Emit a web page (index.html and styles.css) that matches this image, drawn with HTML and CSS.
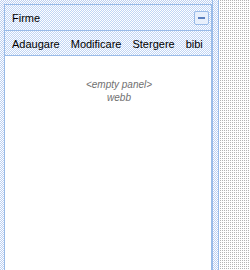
FILE: index.html
```html
<!DOCTYPE html>
<html>
<head>
<link rel="stylesheet" href="styles.css">
</head>
<body>
<div class="desk">
  <div class="outer">
    <div class="panel">
      <div class="header">
        <span class="title">Firme</span>
        <span class="tool"><span class="dash"></span></span>
      </div>
      <div class="toolbar">
        <span class="btn">Adaugare</span>
        <span class="btn">Modificare</span>
        <span class="btn">Stergere</span>
        <span class="btn">bibi</span>
      </div>
      <div class="body">
        <div class="empty">&lt;empty panel&gt;<br>webb</div>
      </div>
    </div>
  </div>
  <div class="split"></div>
  <div class="gray"></div>
</div>
</body>
</html>
```
FILE: styles.css
```css
html, body {
  margin: 0;
  padding: 0;
  width: 250px;
  height: 270px;
  overflow: hidden;
}
.desk {
  display: flex;
  width: 250px;
  height: 270px;
  background: #fff;
}
.outer {
  width: 212px;
  padding: 4px 0 0 4px;
  box-sizing: border-box;
  background-image: repeating-conic-gradient(#bcd0f2 0 25%, #ffffff 0 50%);
  background-size: 2px 2px;
  display: flex;
  flex-direction: column;
}
.panel {
  flex: 1;
  display: flex;
  flex-direction: column;
  border: 1px solid #99bbe8;
  border-bottom: none;
  background: #fff;
}
.header {
  height: 24px;
  display: flex;
  align-items: center;
  justify-content: space-between;
  padding: 1px 2px 0 7px;
  border-bottom: 1px solid #99bbe8;
  background-image: repeating-conic-gradient(#c0d5f5 0 25%, #ffffff 0 50%);
  background-size: 2px 2px;
  font-family: "Liberation Sans", Arial, sans-serif;
  font-size: 11px;
  color: #000;
}
.tool {
  width: 13px;
  height: 12px;
  border: 1px solid #99bbe8;
  border-radius: 2px;
  background: #e8f0fc;
  display: flex;
  align-items: center;
  justify-content: center;
}
.dash {
  width: 7px;
  height: 2px;
  background: #5a7fbe;
}
.toolbar {
  height: 23px;
  display: flex;
  align-items: center;
  gap: 11px;
  padding: 1px 7px 0;
  border-bottom: 1px solid #99bbe8;
  background-image: repeating-conic-gradient(#c0d5f5 0 25%, #ffffff 0 50%);
  background-size: 2px 2px;
  font-family: "Liberation Sans", Arial, sans-serif;
  font-size: 11px;
  color: #000;
}
.body {
  flex: 1;
  padding: 22px 0 0 22px;
}
.empty {
  text-align: center;
  font-family: "Liberation Sans", Arial, sans-serif;
  font-style: italic;
  font-size: 10px;
  line-height: 13px;
  color: #707070;
}
.split {
  width: 5px;
  border-left: 1px solid #99bbe8;
  border-right: 1px solid #99bbe8;
  background-image: repeating-conic-gradient(#bcd0f2 0 25%, #ffffff 0 50%);
  background-size: 2px 2px;
}
.gray {
  flex: 1;
  background-image: conic-gradient(#b4b4b4 0 25%, #ffffff 0 100%);
  background-size: 2px 2px;
}
```
